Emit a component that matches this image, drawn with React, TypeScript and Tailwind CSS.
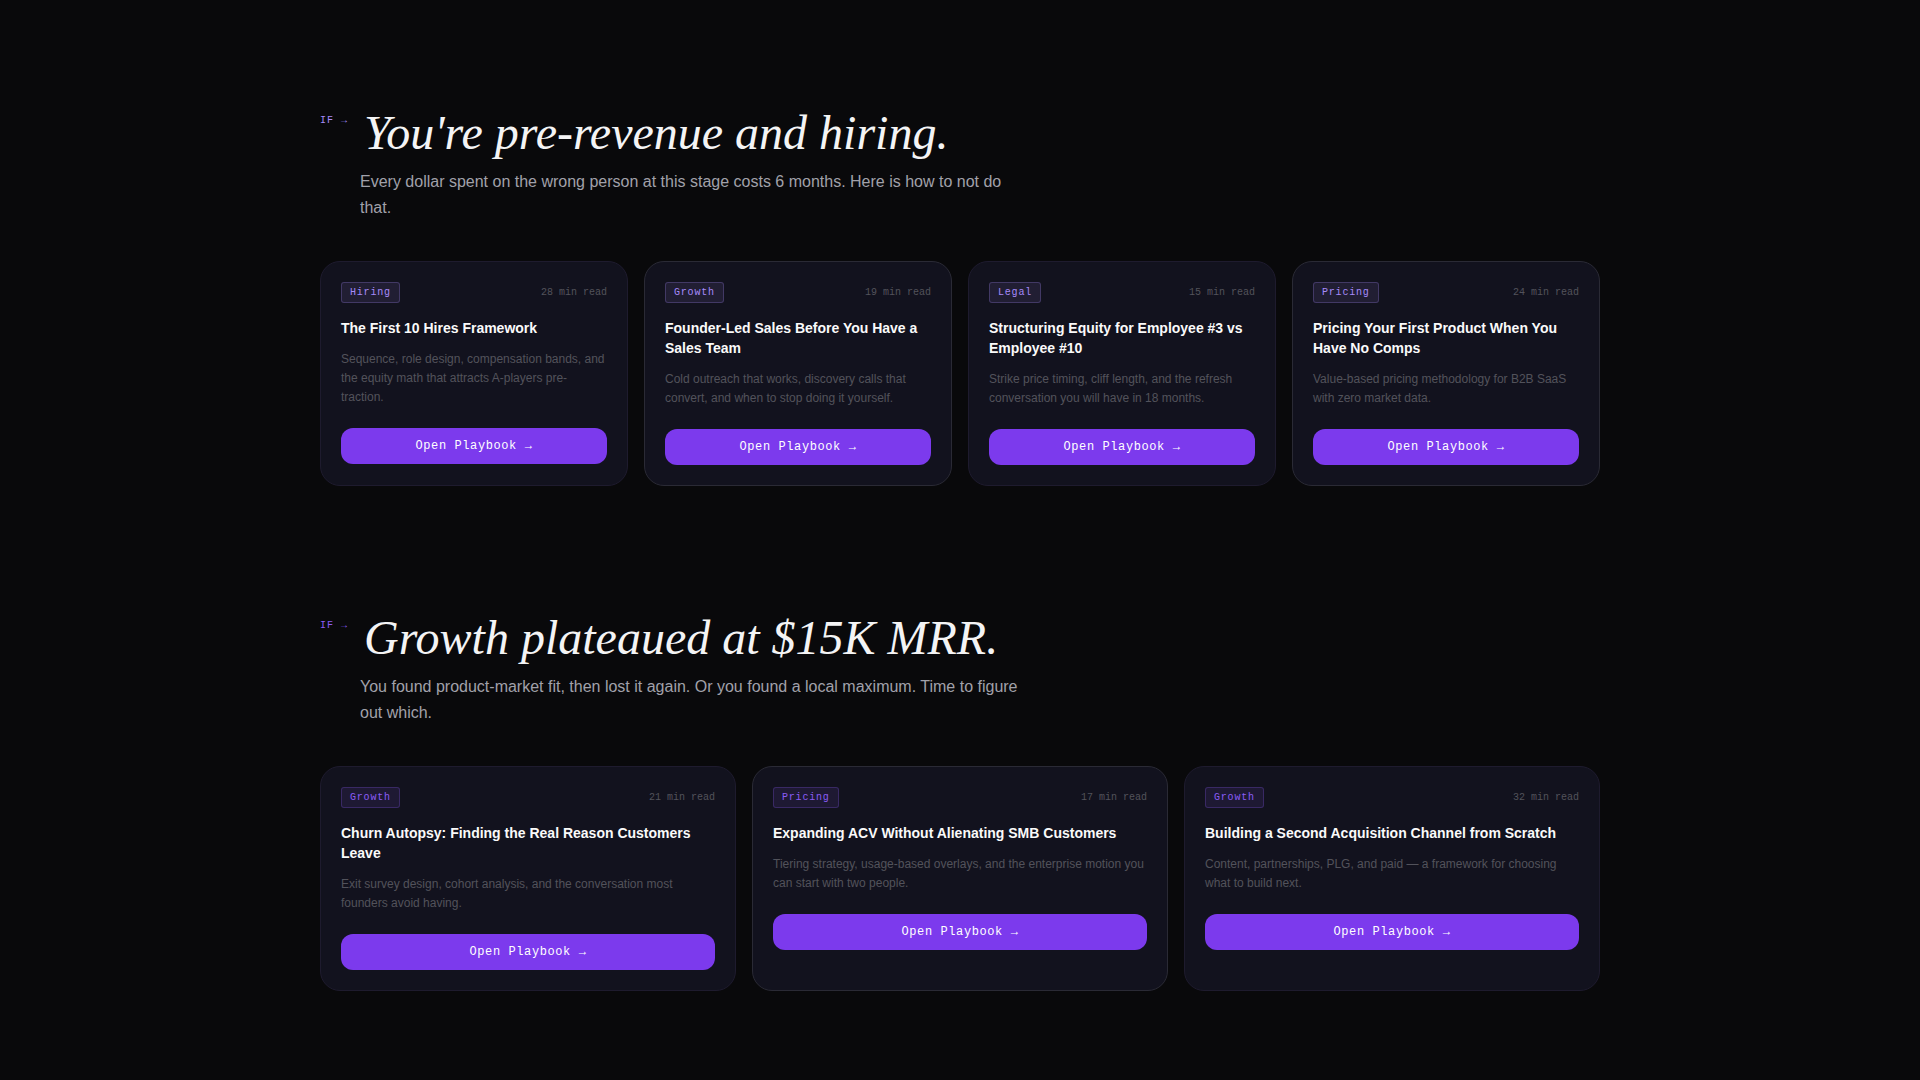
type Playbook = {
  tag: string;
  time: string;
  title: string;
  description: string;
};

type Scenario = {
  heading: string;
  intro: string;
  labelClass: string;
  tagClass: string;
  gridClass: string;
  playbooks: Playbook[];
};

const scenarios: Scenario[] = [
  {
    heading: "You're pre-revenue and hiring.",
    intro:
      "Every dollar spent on the wrong person at this stage costs 6 months. Here is how to not do that.",
    labelClass: "text-[#a78bfa]",
    tagClass: "text-[#a78bfa] bg-[#a78bfa]/10 border-[#a78bfa]/25",
    gridClass: "grid-cols-1 md:grid-cols-2 lg:grid-cols-4",
    playbooks: [
      {
        tag: "Hiring",
        time: "28 min read",
        title: "The First 10 Hires Framework",
        description:
          "Sequence, role design, compensation bands, and the equity math that attracts A-players pre-traction.",
      },
      {
        tag: "Growth",
        time: "19 min read",
        title: "Founder-Led Sales Before You Have a Sales Team",
        description:
          "Cold outreach that works, discovery calls that convert, and when to stop doing it yourself.",
      },
      {
        tag: "Legal",
        time: "15 min read",
        title: "Structuring Equity for Employee #3 vs Employee #10",
        description:
          "Strike price timing, cliff length, and the refresh conversation you will have in 18 months.",
      },
      {
        tag: "Pricing",
        time: "24 min read",
        title: "Pricing Your First Product When You Have No Comps",
        description:
          "Value-based pricing methodology for B2B SaaS with zero market data.",
      },
    ],
  },
  {
    heading: "Growth plateaued at $15K MRR.",
    intro:
      "You found product-market fit, then lost it again. Or you found a local maximum. Time to figure out which.",
    labelClass: "text-[#8b5cf6]",
    tagClass: "text-[#8b5cf6] bg-[#8b5cf6]/10 border-[#8b5cf6]/25",
    gridClass: "grid-cols-1 md:grid-cols-2 lg:grid-cols-3",
    playbooks: [
      {
        tag: "Growth",
        time: "21 min read",
        title: "Churn Autopsy: Finding the Real Reason Customers Leave",
        description:
          "Exit survey design, cohort analysis, and the conversation most founders avoid having.",
      },
      {
        tag: "Pricing",
        time: "17 min read",
        title: "Expanding ACV Without Alienating SMB Customers",
        description:
          "Tiering strategy, usage-based overlays, and the enterprise motion you can start with two people.",
      },
      {
        tag: "Growth",
        time: "32 min read",
        title: "Building a Second Acquisition Channel from Scratch",
        description:
          "Content, partnerships, PLG, and paid — a framework for choosing what to build next.",
      },
    ],
  },
];

function PlaybookCard({
  playbook,
  tagClass,
}: {
  playbook: Playbook;
  tagClass: string;
}) {
  return (
    <article className="rounded-[20px] border border-[#1e1b2e] even:border-[#2a2a35] bg-[#12121e] p-5">
      <div className="flex items-center justify-between mb-[15px] font-['Liberation_Mono',monospace] text-[10px] leading-[15px]">
        <span
          className={`rounded-[3px] border px-2 py-[2px] tracking-[0.08em] ${tagClass}`}
        >
          {playbook.tag}
        </span>
        <span className="text-[#52525b]">{playbook.time}</span>
      </div>
      <h3 className="mb-3 text-sm font-bold text-[#fafafa]">
        {playbook.title}
      </h3>
      <p className="mb-[21px] text-xs leading-[19px] text-[#52525b]">
        {playbook.description}
      </p>
      <button
        type="button"
        className="w-full h-9 rounded-xl bg-[#7c3aed] font-['Liberation_Mono',monospace] text-xs tracking-[0.05em] text-white hover:bg-[#6d28d9] transition-colors"
      >
        Open Playbook →
      </button>
    </article>
  );
}

export default function App() {
  return (
    <main className="min-h-screen bg-[#09090b] pt-[45px] font-['Liberation_Sans',sans-serif]">
      {scenarios.map((scenario) => (
        <section
          key={scenario.heading}
          className="max-w-[1328px] mx-auto px-6 py-16"
        >
          <div className="flex items-start gap-4 mb-3">
            <span
              className={`mt-1 shrink-0 font-['Liberation_Mono',monospace] text-[10px] leading-[15px] tracking-[0.1em] ${scenario.labelClass}`}
            >
              IF →
            </span>
            <h2 className="font-['Liberation_Serif',serif] text-5xl italic text-[#f4f4f5]">
              {scenario.heading}
            </h2>
          </div>
          <p className="ml-10 mb-10 max-w-2xl text-base leading-[26px] text-[#a1a1aa]">
            {scenario.intro}
          </p>
          <div className={`grid gap-4 ${scenario.gridClass}`}>
            {scenario.playbooks.map((playbook) => (
              <PlaybookCard
                key={playbook.title}
                playbook={playbook}
                tagClass={scenario.tagClass}
              />
            ))}
          </div>
        </section>
      ))}
    </main>
  );
}
